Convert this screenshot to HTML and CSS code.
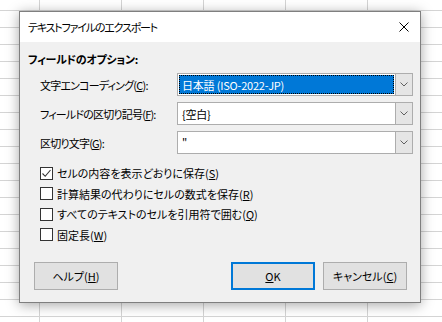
FILE: index.html
```html
<!DOCTYPE html>
<html lang="ja">
<head>
    <meta charset="UTF-8">
    <title>テキストファイルのエクスポート</title>
    <link rel="stylesheet" href="styles.css">
</head>
<body>
    <div class="dialog">
        <div class="titlebar">
            <span class="title">テキストファイルのエクスポート</span>
            <span class="close">
                <svg width="10" height="10" viewBox="0 0 10 10">
                    <path d="M0.5 0.5 L9.5 9.5 M9.5 0.5 L0.5 9.5" stroke="#000" stroke-width="1" fill="none"/>
                </svg>
            </span>
        </div>

        <div class="content">
            <div class="group-title">フィールドのオプション:</div>

            <div class="fields">
                <label>文字エンコーディング(<u>C</u>):</label>
                <div class="combo focused">
                    <span class="value">日本語 (ISO-2022-JP)</span>
                    <span class="drop"><svg width="8" height="5" viewBox="0 0 8 5"><path d="M0.5 0.5 L4 4 L7.5 0.5" stroke="#606060" fill="none"/></svg></span>
                </div>

                <label>フィールドの区切り記号(<u>F</u>):</label>
                <div class="combo">
                    <span class="value">{空白}</span>
                    <span class="drop"><svg width="8" height="5" viewBox="0 0 8 5"><path d="M0.5 0.5 L4 4 L7.5 0.5" stroke="#606060" fill="none"/></svg></span>
                </div>

                <label>区切り文字(<u>G</u>):</label>
                <div class="combo">
                    <span class="value">"</span>
                    <span class="drop"><svg width="8" height="5" viewBox="0 0 8 5"><path d="M0.5 0.5 L4 4 L7.5 0.5" stroke="#606060" fill="none"/></svg></span>
                </div>
            </div>

            <div class="checks">
                <div class="check">
                    <span class="box"><svg width="11" height="11" viewBox="0 0 11 11"><path d="M1.5 5.5 L4.2 8.3 L9.5 2" stroke="#333" stroke-width="1.1" fill="none"/></svg></span>
                    <span>セルの内容を表示どおりに保存(<u>S</u>)</span>
                </div>
                <div class="check">
                    <span class="box"></span>
                    <span>計算結果の代わりにセルの数式を保存(<u>R</u>)</span>
                </div>
                <div class="check">
                    <span class="box"></span>
                    <span>すべてのテキストのセルを引用符で囲む(<u>Q</u>)</span>
                </div>
                <div class="check">
                    <span class="box"></span>
                    <span>固定長(<u>W</u>)</span>
                </div>
            </div>

            <div class="buttons">
                <button class="btn">ヘルプ(<u>H</u>)</button>
                <div class="right-btns">
                    <button class="btn default"><u>O</u>K</button>
                    <button class="btn">キャンセル(<u>C</u>)</button>
                </div>
            </div>
        </div>
    </div>
</body>
</html>
```

FILE: styles.css
```css
body {
    margin: 0;
    width: 442px;
    height: 322px;
    overflow: hidden;
    font-family: "Noto Sans CJK JP", "Noto Sans", sans-serif;
    font-size: 11px;
    font-feature-settings: "palt";
    color: #000;
    background-color: #fff;
    background-image:
        linear-gradient(to right, #d4d4d4 1px, transparent 1px),
        linear-gradient(to bottom, #d4d4d4 1px, transparent 1px);
    background-size: 82px 17px;
    background-position: 39px 10px;
}
.dialog {
    margin: 11px 0 0 19px;
    width: 400px;
    height: 290px;
    border: 1px solid #7f7f7f;
    background-color: #f0f0f0;
    box-shadow: 0 2px 12px rgba(0, 0, 0, 0.35);
    display: flex;
    flex-direction: column;
}
.titlebar {
    height: 30px;
    background-color: #fff;
    display: flex;
    align-items: center;
    justify-content: space-between;
    padding: 0 10px 0 8px;
}
.title {
    letter-spacing: -1.2px;
}
.close {
    display: flex;
    margin-right: 1px;
}
.content {
    padding: 9px 13px 0 8px;
    flex: 1;
    display: flex;
    flex-direction: column;
}
.group-title {
    font-weight: bold;
    line-height: 16px;
    letter-spacing: -0.3px;
}
.fields {
    display: grid;
    grid-template-columns: 137px 236px;
    row-gap: 6px;
    margin: 6px 0 0 12px;
    align-items: center;
}
.fields label {
    line-height: 16px;
    letter-spacing: -0.8px;
    white-space: nowrap;
}
.combo {
    height: 21px;
    border: 1px solid #adadad;
    background-color: #fff;
    display: flex;
    align-items: stretch;
}
.combo .value {
    flex: 1;
    display: flex;
    align-items: center;
    padding-left: 3px;
    margin: 1px;
    letter-spacing: -0.2px;
}
.combo.focused .value {
    background-color: #0078d7;
    color: #fff;
    outline: 1px dotted #000;
    outline-offset: -1px;
}
.drop {
    width: 16px;
    background-color: #e5e5e5;
    border-left: 1px solid #adadad;
    display: flex;
    align-items: center;
    justify-content: center;
}
.checks {
    margin: 9px 0 0 12px;
    display: flex;
    flex-direction: column;
}
.check {
    height: 20.5px;
    display: flex;
    align-items: center;
    gap: 4px;
}
.box {
    width: 11px;
    height: 11px;
    border: 1px solid #333;
    background-color: #fff;
    display: flex;
}
.buttons {
    margin: 17px 0 0 6px;
    display: flex;
    justify-content: space-between;
}
.right-btns {
    display: flex;
    gap: 8px;
}
.btn {
    width: 84px;
    height: 28px;
    background-color: #e1e1e1;
    border: 1px solid #adadad;
    font-family: inherit;
    font-size: 11px;
    font-feature-settings: "palt";
    color: #000;
    padding: 0;
}
.btn.default {
    border: 2px solid #0078d7;
}
```
